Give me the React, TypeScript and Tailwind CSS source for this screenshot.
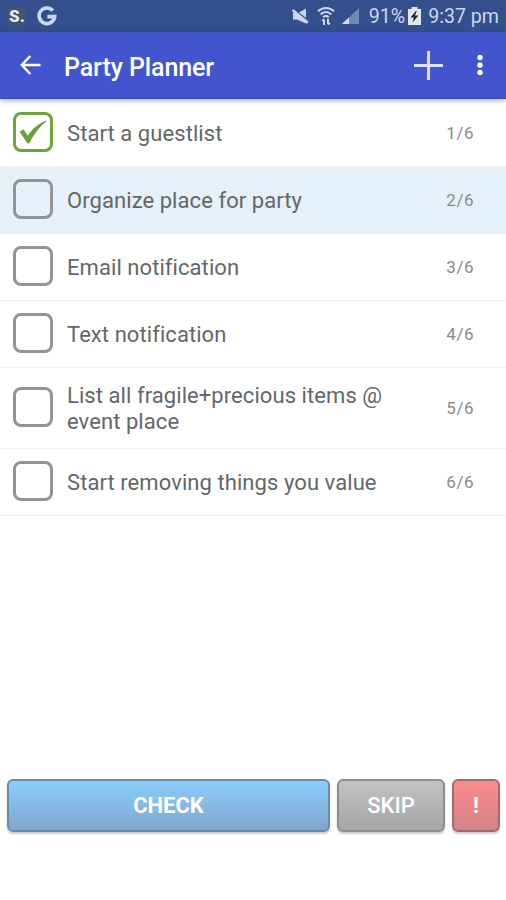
import { useState } from "react";

type Task = { label: string; done: boolean };

const initialTasks: Task[] = [
  { label: "Start a guestlist", done: true },
  { label: "Organize place for party", done: false },
  { label: "Email notification", done: false },
  { label: "Text notification", done: false },
  { label: "List all fragile+precious items @ event place", done: false },
  { label: "Start removing things you value", done: false },
];

function StatusBar() {
  return (
    <div className="flex h-8 items-center bg-[#34508c] pr-[7px] pl-2 text-[#ccd6ee]">
      <div className="grid h-[18px] w-[18px] place-items-center bg-[#46536f] text-[17px] leading-none font-black text-[#e3e8f2]">
        <span>S.</span>
      </div>
      <svg className="ml-[11px]" width="20" height="20" viewBox="0 0 20 20" fill="none" stroke="#ccd9f3" strokeWidth="3.6">
        <path d="M15.8 4.6A7.8 7.8 0 1 0 17.7 10.6H10.4" />
      </svg>

      <div className="ml-auto flex items-center">
        <svg width="17" height="17" viewBox="0 0 17 17" fill="#ccd6ee">
          <path d="M1 5h5l8-4.5V15.5L5 11.5H1z" />
          <path d="M0 .2 17 13.6" stroke="#34508c" strokeWidth="2" />
          <path d="M.5 2 15.8 14.8" stroke="#ccd6ee" strokeWidth="2.6" />
        </svg>
        <svg className="ml-2" width="18" height="20" viewBox="0 0 18 20" fill="none" stroke="#ccd6ee" strokeWidth="2">
          <path d="M1 5.4C5.5.8 12.5.8 17 5.4M3.7 8.5c3-3.3 7.6-3.3 10.6 0M6.3 11.2c1.6-1.6 3.8-1.6 5.4 0" />
          <path d="M7 19v-5.5M5.3 15.2 7 13.3M11 12.7v5.6M12.7 16.5 11 18.5" />
        </svg>
        <svg className="ml-[7px]" width="17" height="16" viewBox="0 0 17 16">
          <path d="M0 16 17 0v16z" fill="#7187b4" />
          <path d="M0 16 7 9.4V16z" fill="#d8e1f3" />
        </svg>
        <span className="mt-px ml-[10px] text-[19.6px] leading-8">91%</span>
        <svg className="ml-[3px]" width="13" height="18" viewBox="0 0 13 18">
          <path d="M3.5 0h6v2H13v16H0V2h3.5z" fill="#e1e6ed" />
          <path d="M7.8 4 2.6 10.6h3.2L4.6 15.6l5.8-7.2H6.9L8.8 4z" fill="#202836" />
        </svg>
        <span className="mt-px ml-[7px] text-[19.6px] leading-8 whitespace-nowrap">9:37 pm</span>
      </div>
    </div>
  );
}

function Toolbar() {
  return (
    <header className="relative z-10 flex h-[67px] items-center border-b border-[#3449b5] bg-[#4255cf] text-white shadow-[0_2px_5px_rgba(0,0,0,.3)]">
      <button className="ml-5" aria-label="Back">
        <svg width="21" height="20" viewBox="0 0 21 20" fill="none" stroke="currentColor" strokeWidth="2.4">
          <path d="M10.3 1 1.8 10l8.5 9M2 10h18.5" />
        </svg>
      </button>
      <h1 className="mt-1.5 ml-[23px] text-[25px] font-medium tracking-[-0.1px]">Party Planner</h1>
      <button className="mr-[34px] ml-auto" aria-label="Add">
        <svg width="29" height="29" viewBox="0 0 29 29" stroke="#dde2ff" strokeWidth="3">
          <path d="M14.5 0v29M0 14.5h29" />
        </svg>
      </button>
      <button className="mr-[23px]" aria-label="More">
        <svg width="6" height="22" viewBox="0 0 6 22" fill="currentColor">
          <circle cx="3" cy="3.5" r="2.7" />
          <circle cx="3" cy="11" r="2.7" />
          <circle cx="3" cy="18.5" r="2.7" />
        </svg>
      </button>
    </header>
  );
}

function Checkbox({ checked }: { checked: boolean }) {
  return (
    <span
      className={`grid h-10 w-10 shrink-0 place-items-center rounded-[8px] border-[3px] ${
        checked ? "border-[#72a33b]" : "border-[#949494]"
      }`}
    >
      {checked && (
        <svg width="28" height="24" viewBox="0 0 28 24" fill="#6ba037">
          <path d="M.6 11.8 4.6 9.2l4 6.6C13.6 8.8 19.6 3.3 27.2.8l.2.9C21.6 5.6 15.4 13 10.4 23.2H8.4z" />
        </svg>
      )}
    </span>
  );
}

export default function App() {
  const [tasks, setTasks] = useState(initialTasks);
  const [current, setCurrent] = useState(1);

  const advance = () => setCurrent((index) => (index + 1) % tasks.length);

  const check = () => {
    setTasks((items) => items.map((item, i) => (i === current ? { ...item, done: true } : item)));
    advance();
  };

  return (
    <main className="flex h-[900px] w-full flex-col bg-white font-['Roboto',sans-serif]">
      <StatusBar />
      <Toolbar />

      <ul className="flex-1 pt-px">
        {tasks.map((task, i) => (
          <li
            key={task.label}
            onClick={() => setCurrent(i)}
            className={`flex min-h-[67px] items-center border-b border-[#eeeeee] pt-[11px] pr-8 pb-[13px] pl-[13px] ${
              i === current ? "bg-[#e5f0f9]" : "bg-white"
            }`}
          >
            <Checkbox checked={task.done} />
            <span className="ml-[14px] w-[335px] pt-1 text-[22px] leading-[26px] tracking-[0.07px] text-[#63676a]">
              {task.label}
            </span>
            <span className="ml-auto pt-[3px] text-[17px] tracking-[0.5px] text-[#888b8d]">
              {i + 1}/{tasks.length}
            </span>
          </li>
        ))}
      </ul>

      <footer className="mb-[68px] flex h-[53px] gap-[7px] pr-1.5 pl-[7px] text-[22px] text-white">
        <button
          onClick={check}
          className="w-[323px] rounded-md border-2 border-[#6a8ba6] bg-linear-to-b from-[#8bcdfb] to-[#80a6ce] font-bold shadow-[0_2px_2px_rgba(0,0,0,.2)]"
        >
          CHECK
        </button>
        <button
          onClick={advance}
          className="w-[108px] rounded-md border-2 border-[#8b8d8f] bg-linear-to-b from-[#c1c2c3] to-[#a4a6a8] font-medium shadow-[0_2px_2px_rgba(0,0,0,.2)]"
        >
          SKIP
        </button>
        <button className="flex-1 rounded-md border-2 border-[#9f6d71] bg-linear-to-b from-[#fa8b8d] to-[#d28387] font-bold shadow-[0_2px_2px_rgba(0,0,0,.2)]">
          !
        </button>
      </footer>
    </main>
  );
}
